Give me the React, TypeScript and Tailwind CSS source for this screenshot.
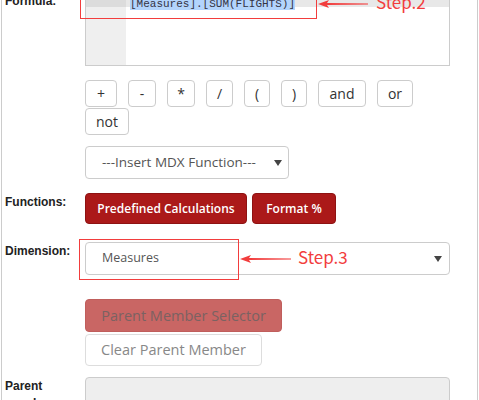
import React from "react";

const ops = [
  { t: "+", w: "w-[32px]" },
  { t: "-", w: "w-[28px]" },
  { t: "*", w: "w-[28px]" },
  { t: "/", w: "w-[27px]" },
  { t: "(", w: "w-[26px]" },
  { t: ")", w: "w-[26px]" },
  { t: "and", w: "w-[48px]" },
  { t: "or", w: "w-[36px]" },
  { t: "not", w: "w-[44px]" },
];

const Caret = () => (
  <svg width="8" height="6" viewBox="0 0 8 6" className="shrink-0">
    <polygon points="0,0 8,0 4,6" fill="#444" />
  </svg>
);

const Arrow = ({ len }: { len: number }) => (
  <svg width={len} height="10" viewBox={`0 0 ${len} 10`}>
    <polygon
      points={`0,5 11,1 9,4 ${len},4.6 ${len},5.4 9,6 11,9`}
      fill="#f23d3d"
    />
  </svg>
);

const Label = ({ children, pt = "pt-[1px]" }: { children: React.ReactNode; pt?: string }) => (
  <div
    className={`w-[83px] shrink-0 pl-[3px] pr-2 ${pt} text-[12px] leading-[17px] font-bold text-[#222]`}
    style={{ fontFamily: '"Liberation Sans", Arial, sans-serif' }}
  >
    {children}
  </div>
);

export default function App() {
  return (
    <div
      className="relative h-[400px] w-[479px] overflow-hidden bg-white"
      style={{ fontFamily: '"Open Sans", "Liberation Sans", sans-serif' }}
    >
      <div className="ml-[1px] -mt-[14px] w-[477px] border-x border-[#ccc] pb-10">
        {/* Formula */}
        <div className="flex">
          <Label pt="pt-[7px]">Formula:</Label>
          <div className="flex h-[80px] w-[365px] border border-[#ccc] bg-white">
            <div className="w-[40px] bg-[#efefef]">
              <div
                className="h-[20px] bg-[#dcdcdc] pr-[13px] pt-[2px] text-right text-[11px] leading-[14px] text-[#888]"
                style={{ fontFamily: '"Liberation Mono", monospace' }}
              >
                1
              </div>
            </div>
            <div className="flex-1">
              <div className="h-[20px] bg-[#e8e8e8] pl-[4px] pt-[2px]">
                <span
                  className="bg-[#b3d4fc] text-[11px] leading-[14px] text-[#334]"
                  style={{ fontFamily: '"Liberation Mono", monospace' }}
                >
                  [Measures].[SUM(FLIGHTS)]
                </span>
              </div>
            </div>
          </div>
        </div>

        {/* Operators */}
        <div className="mt-[14px] flex">
          <div className="w-[83px] shrink-0" />
          <div className="flex w-[365px] flex-col">
            <div className="flex w-[365px] flex-wrap gap-x-[11px] gap-y-[1px]">
              {ops.map((o) => (
                <button
                  key={o.t}
                  className={`${o.w} h-[27px] rounded-[4px] border border-[#ccc] bg-white text-[14px] leading-none text-[#333]`}
                >
                  {o.t}
                </button>
              ))}
            </div>
            <div className="mt-[11px] flex h-[33px] w-[204px] items-center justify-between rounded-[4px] border border-[#ccc] bg-white pl-[16px] pr-[6px] text-[13.5px] text-[#555]">
              <span>---Insert MDX Function---</span>
              <Caret />
            </div>
          </div>
        </div>

        {/* Functions */}
        <div className="mt-[14px] flex">
          <Label>Functions:</Label>
          <div className="flex gap-[5px]">
            <button className="h-[31px] w-[162px] rounded-[4px] border border-[#8e1212] bg-[#ab1919] text-[12px] font-semibold text-white">
              Predefined Calculations
            </button>
            <button className="h-[31px] w-[84px] rounded-[4px] border border-[#8e1212] bg-[#ab1919] text-[12px] font-semibold text-white">
              Format %
            </button>
          </div>
        </div>

        {/* Dimension */}
        <div className="mt-[18px] flex">
          <Label>Dimension:</Label>
          <div className="flex h-[33px] w-[365px] items-center justify-between rounded-[4px] border border-[#ccc] bg-white pl-[16px] pr-[7px] text-[12.5px] text-[#555]">
            <span>Measures</span>
            <Caret />
          </div>
        </div>

        {/* Parent member buttons */}
        <div className="mt-[24px] flex">
          <div className="w-[83px] shrink-0" />
          <div className="flex flex-col gap-[2px]">
            <button className="h-[33px] w-[197px] rounded-[4px] border border-[#c05e5c] bg-[#c96664] text-[14.5px] text-[#7a6262]">
              Parent Member Selector
            </button>
            <button className="h-[32px] w-[177px] rounded-[4px] border border-[#ddd] bg-white text-[14.5px] text-[#888]">
              Clear Parent Member
            </button>
          </div>
        </div>

        {/* Parent member */}
        <div className="mt-[11px] flex">
          <Label>Parent member:</Label>
          <div className="h-[34px] w-[365px] rounded-[4px] border border-[#ccc] bg-[#eee]" />
        </div>
      </div>

      {/* Step.2 annotation */}
      <div className="absolute left-[80px] top-[-6px] h-[25px] w-[237px] border border-[#f23d3d]" />
      <div className="absolute left-[318px] top-[-1px]">
        <Arrow len={50} />
      </div>
      <div
        className="absolute left-[376px] top-[-9px] text-[17px] leading-[22px] text-[#f23d3d]"
        style={{ fontFamily: '"Noto Sans CJK SC", sans-serif' }}
      >
        Step.2
      </div>

      {/* Step.3 annotation */}
      <div className="absolute left-[79px] top-[239px] h-[41px] w-[160px] border border-[#f23d3d]" />
      <div className="absolute left-[240px] top-[254px]">
        <Arrow len={51} />
      </div>
      <div
        className="absolute left-[298px] top-[246px] text-[17px] leading-[22px] text-[#f23d3d]"
        style={{ fontFamily: '"Noto Sans CJK SC", sans-serif' }}
      >
        Step.3
      </div>
    </div>
  );
}
